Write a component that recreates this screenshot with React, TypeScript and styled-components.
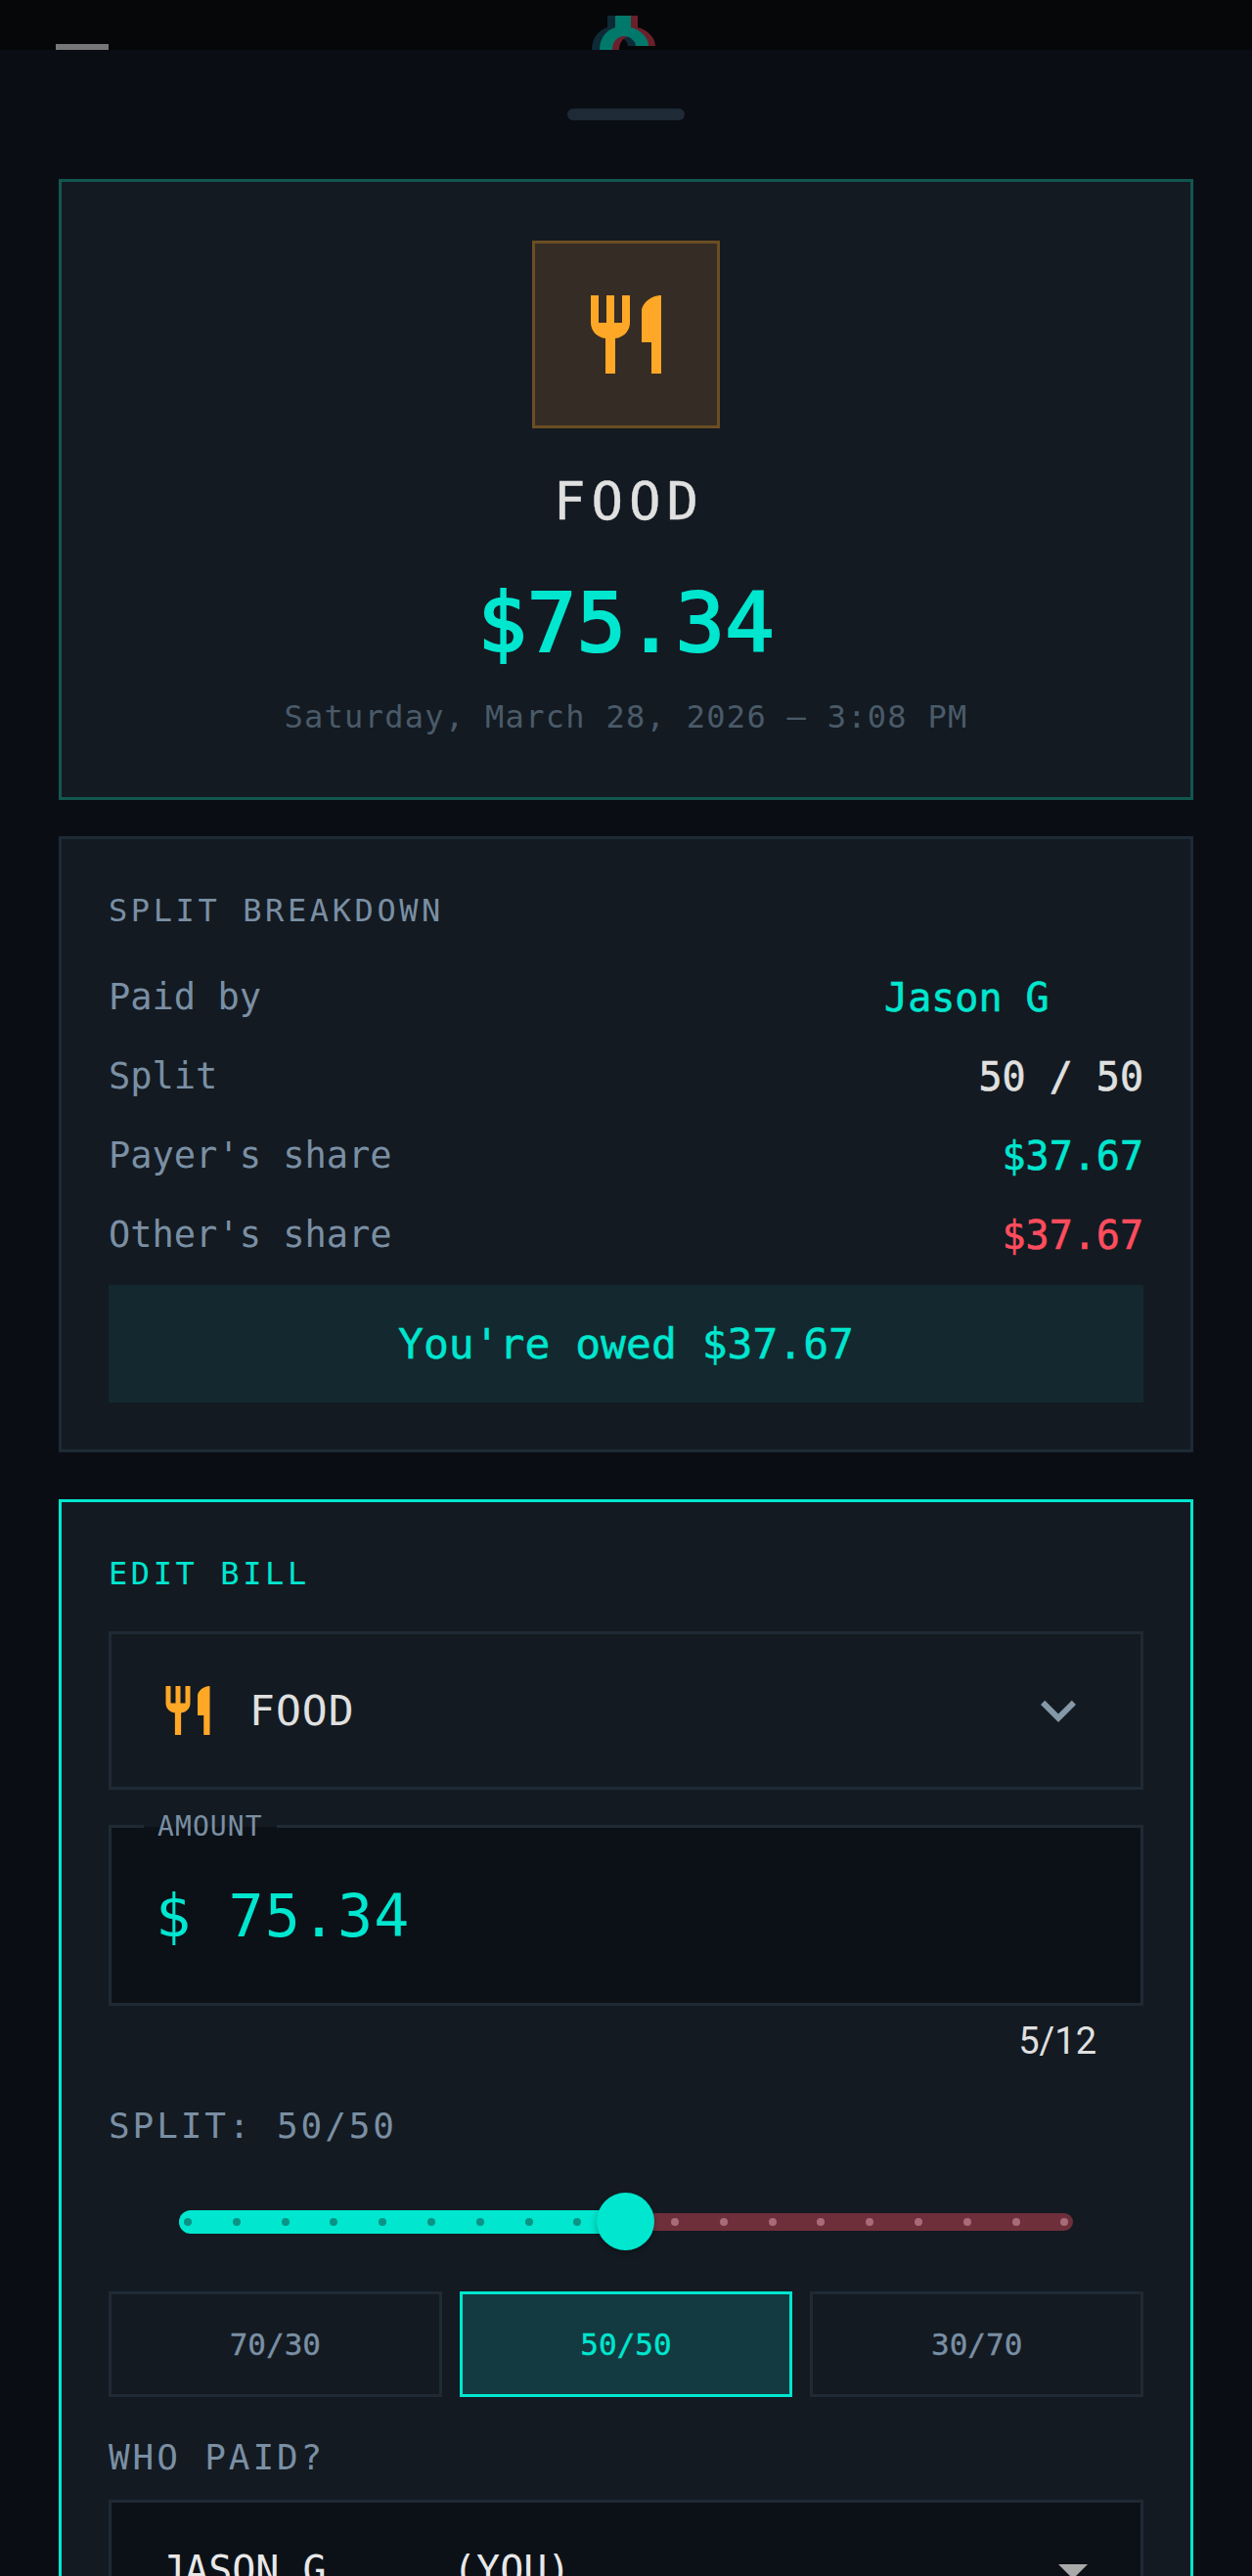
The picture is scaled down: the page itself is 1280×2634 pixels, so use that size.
import React from "react";
import styled, { createGlobalStyle } from "styled-components";

const teal = "#00e6cf";
const mono = `"DejaVu Sans Mono", monospace`;

const Global = createGlobalStyle`
  html, body { margin: 0; padding: 0; background: #0a0e14; }
  html, body, #root { height: 2634px; overflow: hidden; }
  * { box-sizing: border-box; }
`;

const Page = styled.div`
  width: 1280px;
  height: 2634px;
  overflow: hidden;
  font-family: ${mono};
  background: #0a0e14;
`;

const TopBar = styled.header`
  height: 51px;
  background: #060709;
  display: flex;
  align-items: flex-end;
  justify-content: center;
  position: relative;
  overflow: hidden;
`;

const Burger = styled.span`
  position: absolute;
  left: 57px;
  bottom: 0;
  width: 54px;
  height: 6px;
  background: #777;
`;

const Logo = styled.svg`
  width: 100px;
  height: 51px;
  display: block;
`;

const Sheet = styled.main`
  padding: 60px 60px 0;
  display: flex;
  flex-direction: column;
`;

const Handle = styled.div`
  width: 120px;
  height: 12px;
  border-radius: 6px;
  background: #1e2a35;
  align-self: center;
  margin-bottom: 60px;
`;

const HeroCard = styled.section`
  height: 635px;
  background: #131a22;
  border: 3px solid #125650;
  display: flex;
  flex-direction: column;
  align-items: center;
  padding-top: 60px;
  margin-bottom: 37px;
`;

const IconBox = styled.div`
  width: 192px;
  height: 192px;
  background: #352c25;
  border: 3px solid #6b4e23;
  display: flex;
  align-items: center;
  justify-content: center;
  margin-bottom: 45px;
`;

const CategoryTitle = styled.h1`
  margin: 0 0 44px;
  padding-left: 6px;
  font-size: 54px;
  line-height: 60px;
  font-weight: 400;
  letter-spacing: 6px;
  color: #e0e0e0;
  -webkit-text-stroke: 0.4px #e0e0e0;
`;

const Amount = styled.div`
  font-size: 84px;
  line-height: 100px;
  font-weight: 400;
  color: ${teal};
  -webkit-text-stroke: 2.2px ${teal};
  margin-bottom: 26px;
`;

const DateText = styled.div`
  font-size: 32px;
  line-height: 40px;
  letter-spacing: 1.3px;
  color: #4a5a68;
`;

const BreakdownCard = styled.section`
  height: 630px;
  background: #131a22;
  border: 3px solid #1e2a35;
  padding: 48px;
  margin-bottom: 48px;
`;

const SectionLabel = styled.div<{ $accent?: boolean }>`
  font-size: 32px;
  line-height: 40px;
  letter-spacing: 3.6px;
  color: ${(p) => (p.$accent ? teal : "#7a8fa3")};
  margin-top: 5px;
  margin-bottom: ${(p) => (p.$accent ? "39px" : "28px")};
`;

const Row = styled.div`
  display: flex;
  justify-content: space-between;
  align-items: center;
  height: 81px;
`;

const RowName = styled.span`
  font-size: 37px;
  color: #7a8fa3;
`;

const RowValue = styled.span<{ $color: string }>`
  font-size: 40px;
  white-space: pre;
  color: ${(p) => p.$color};
  -webkit-text-stroke: 0.6px ${(p) => p.$color};
`;

const OwedBanner = styled.div`
  height: 120px;
  background: #13292f;
  color: ${teal};
  font-size: 43px;
  -webkit-text-stroke: 0.5px ${teal};
  display: flex;
  align-items: center;
  justify-content: center;
  margin-top: 11px;
`;

const EditCard = styled.section`
  background: #131a22;
  border: 3px solid ${teal};
  padding: 48px;
  height: 1200px;
`;

const SelectBox = styled.div`
  height: 162px;
  border: 3px solid #1f2a35;
  padding: 0 48px;
  display: flex;
  align-items: center;
  margin-bottom: 36px;
`;

const SelectText = styled.span`
  font-size: 43px;
  letter-spacing: 1px;
  color: #e0e0e0;
  margin-left: 33px;
  flex: 1;
`;

const AmountField = styled.div`
  height: 185px;
  background: #0c1118;
  border: 3px solid #1f2a35;
  position: relative;
  display: flex;
  align-items: center;
  padding-left: 45px;
`;

const FieldLegend = styled.label`
  position: absolute;
  left: 33px;
  top: -15px;
  padding: 0 14px;
  font-size: 28px;
  line-height: 28px;
  letter-spacing: 1.1px;
  color: #7a8fa3;
  background: linear-gradient(#131a22 14px, #0c1118 14px);
`;

const AmountValue = styled.span`
  font-size: 60px;
  letter-spacing: 1.1px;
  color: ${teal};
`;

const Counter = styled.div`
  font-family: Roboto, sans-serif;
  font-size: 38px;
  line-height: 42px;
  text-align: right;
  color: #e0e0e0;
  padding-right: 48px;
  margin-top: 15px;
  margin-bottom: 44px;
`;

const FieldLabel = styled.div`
  font-size: 36px;
  line-height: 44px;
  letter-spacing: 2.9px;
  color: #7a8fa3;
`;

const SliderWrap = styled.div`
  position: relative;
  height: 60px;
  margin-top: 46px;
  margin-bottom: 41px;
`;

const Rail = styled.div`
  position: absolute;
  left: 72px;
  width: 914px;
  top: 21px;
  height: 18px;
  border-radius: 9px;
  background: #6f2f3a;
`;

const ActiveTrack = styled.div`
  position: absolute;
  left: 72px;
  width: 457px;
  top: 18px;
  height: 24px;
  border-radius: 12px 0 0 12px;
  background: ${teal};
`;

const Dot = styled.span<{ $on: boolean }>`
  position: absolute;
  top: 25.5px;
  width: 8px;
  height: 8px;
  border-radius: 50%;
  background: ${(p) => (p.$on ? "#0a9485" : "#a76c78")};
`;

const Thumb = styled.div`
  position: absolute;
  left: 499px;
  top: 0;
  width: 59px;
  height: 59px;
  border-radius: 50%;
  background: ${teal};
  box-shadow: 0 3px 6px rgba(0, 0, 0, 0.3);
`;

const SplitButtons = styled.div`
  display: grid;
  grid-template-columns: repeat(3, 1fr);
  gap: 18px;
  margin-bottom: 40px;
`;

const SplitButton = styled.div<{ $active?: boolean }>`
  height: 108px;
  border: 3px solid ${(p) => (p.$active ? teal : "#1f2a35")};
  background: ${(p) => (p.$active ? "#133a40" : "transparent")};
  color: ${(p) => (p.$active ? teal : "#7a8fa3")};
  -webkit-text-stroke: 0.4px ${(p) => (p.$active ? teal : "#7a8fa3")};
  font-size: 31px;
  display: flex;
  align-items: center;
  justify-content: center;
`;

const PayerSelect = styled.div`
  height: 144px;
  margin-top: 21px;
  background: #0c1118;
  border: 3px solid #1f2a35;
  padding-left: 51px;
  display: flex;
  align-items: center;
  position: relative;
`;

const PayerText = styled.span`
  font-size: 40px;
  white-space: pre;
  color: #e8e8e8;
`;

const PayerTag = styled.span`
  margin-left: 9px;
`;

const PayerArrow = styled.svg`
  position: absolute;
  right: 33px;
  top: 33px;
  width: 72px;
  height: 72px;
`;

const RestaurantIcon: React.FC<{ size: number }> = ({ size }) => (
  <svg width={size} height={size} viewBox="0 0 24 24" fill="#ffa726">
    <path d="M11 9H9V2H7v7H5V2H3v7c0 2.12 1.66 3.84 3.75 3.97V22h2.5v-9.03C11.34 12.84 13 11.12 13 9V2h-2v7zm5-3v8h2.5v8H21V2c-2.76 0-5 2.24-5 4z" />
  </svg>
);

const dots = Array.from({ length: 19 }, (_, i) => i);
const archPath =
  "M39 16H55V28C66 31 73 39 73 47H60C60 42 54 37 48 37C42 37 36 42 36 51H23C23 40 29 31 39 28Z";

export default function App() {
  return (
    <Page>
      <Global />
      <TopBar>
        <Burger />
        <Logo viewBox="0 0 100 51">
          <path d={archPath} fill="#0e2a36" transform="translate(-8 0)" />
          <path d={archPath} fill="#6b1f2a" transform="translate(7 0)" />
          <path d={archPath} fill="#00796b" />
        </Logo>
      </TopBar>
      <Sheet>
        <Handle />
        <HeroCard>
          <IconBox>
            <RestaurantIcon size={96} />
          </IconBox>
          <CategoryTitle>FOOD</CategoryTitle>
          <Amount>$75.34</Amount>
          <DateText>Saturday, March 28, 2026 — 3:08 PM</DateText>
        </HeroCard>
        <BreakdownCard>
          <SectionLabel>SPLIT BREAKDOWN</SectionLabel>
          <Row>
            <RowName>Paid by</RowName>
            <RowValue $color={teal}>{"Jason G    "}</RowValue>
          </Row>
          <Row>
            <RowName>Split</RowName>
            <RowValue $color="#e0e0e0">50 / 50</RowValue>
          </Row>
          <Row>
            <RowName>Payer's share</RowName>
            <RowValue $color={teal}>$37.67</RowValue>
          </Row>
          <Row>
            <RowName>Other's share</RowName>
            <RowValue $color="#ff4d5e">$37.67</RowValue>
          </Row>
          <OwedBanner>You're owed $37.67</OwedBanner>
        </BreakdownCard>
        <EditCard>
          <SectionLabel $accent>EDIT BILL</SectionLabel>
          <SelectBox>
            <RestaurantIcon size={60} />
            <SelectText>FOOD</SelectText>
            <svg width="72" height="72" viewBox="0 0 24 24" fill="#8598a8">
              <path d="M16.59 8.59 12 13.17 7.41 8.59 6 10l6 6 6-6z" />
            </svg>
          </SelectBox>
          <AmountField>
            <FieldLegend>AMOUNT</FieldLegend>
            <AmountValue>$ 75.34</AmountValue>
          </AmountField>
          <Counter>5/12</Counter>
          <FieldLabel>SPLIT: 50/50</FieldLabel>
          <SliderWrap>
            <Rail />
            <ActiveTrack />
            {dots.map((i) => (
              <Dot key={i} $on={i < 9} style={{ left: 77 + i * 49.8 }} />
            ))}
            <Thumb />
          </SliderWrap>
          <SplitButtons>
            <SplitButton>70/30</SplitButton>
            <SplitButton $active>50/50</SplitButton>
            <SplitButton>30/70</SplitButton>
          </SplitButtons>
          <FieldLabel>WHO PAID?</FieldLabel>
          <PayerSelect>
            <PayerText>
              {"JASON G     "}
              <PayerTag>(YOU)</PayerTag>
            </PayerText>
            <PayerArrow viewBox="0 0 24 24" fill="#aaaaaa">
              <path d="M7 10l5 5 5-5z" />
            </PayerArrow>
          </PayerSelect>
        </EditCard>
      </Sheet>
    </Page>
  );
}
